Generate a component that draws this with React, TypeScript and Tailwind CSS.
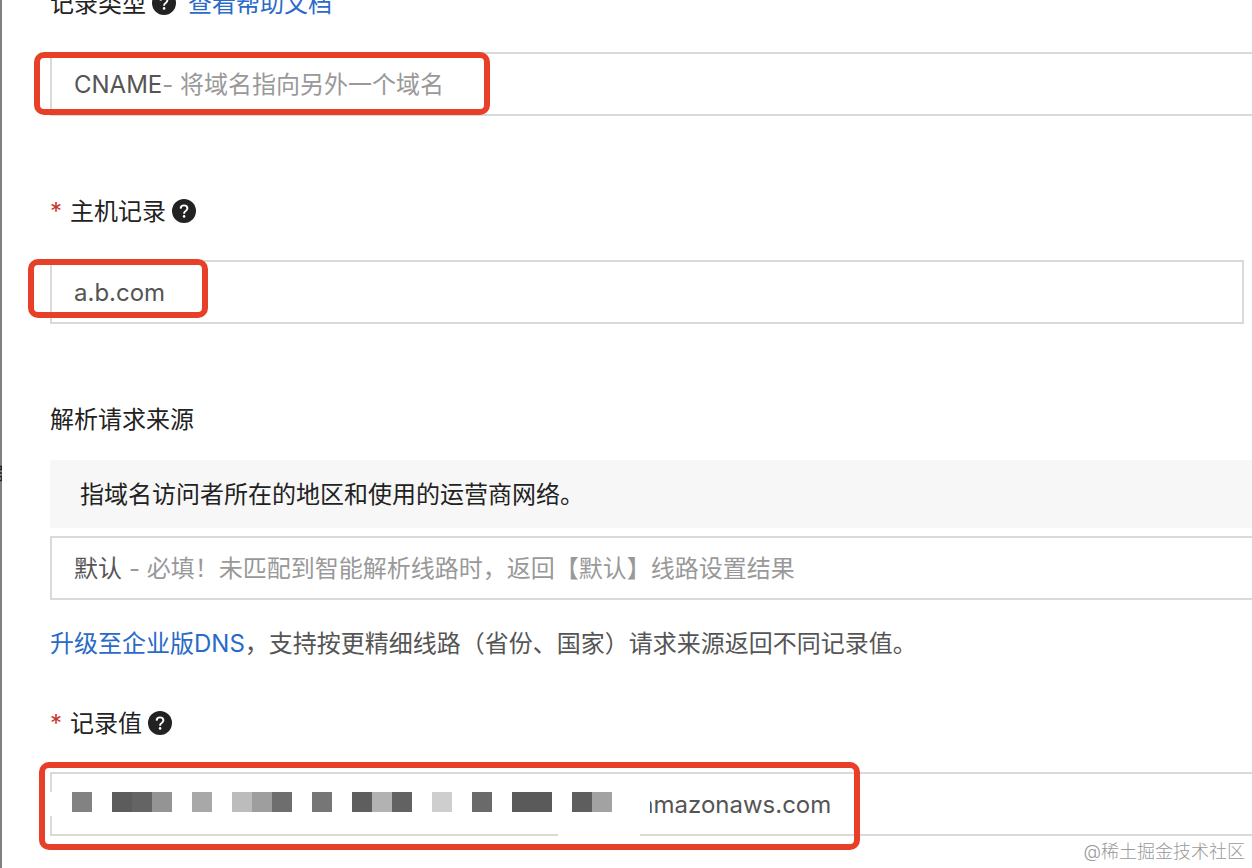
import React, { useState } from "react";

const MOSAIC = [
  "bg-[#828282]", "", "bg-[#5c5c5c]", "bg-[#646464]", "bg-[#949494]", "",
  "bg-[#a8a8a8]", "", "bg-[#bcbcbc]", "bg-[#9e9e9e]", "bg-[#6e6e6e]", "",
  "bg-[#767676]", "", "bg-[#5e5e5e]", "bg-[#b2b2b2]", "bg-[#626262]", "",
  "bg-[#cecece]", "", "bg-[#6a6a6a]", "", "bg-[#5a5a5a]", "bg-[#5a5a5a]", "",
  "bg-[#5e5e5e]", "bg-[#a2a2a2]",
];

const HelpIcon = () => (
  <svg viewBox="0 0 24 24" className="h-6 w-6 shrink-0" aria-hidden="true">
    <circle cx="12" cy="12" r="12" fill="#222" />
    <path
      d="M8.6 9.6C8.7 7.5 10 6.4 12 6.4s3.4 1.1 3.4 2.9c0 1.3-.7 2-1.7 2.7-1.2.8-1.6 1.2-1.6 2.3v.4"
      fill="none"
      stroke="#fff"
      strokeWidth="1.9"
    />
    <circle cx="12.1" cy="17.4" r="1.3" fill="#fff" />
  </svg>
);

const HelpButton = ({ label }: { label: string }) => (
  <button type="button" aria-label={label} className="mb-0.5 ml-1.5 rounded-full">
    <HelpIcon />
  </button>
);

const Required = () => (
  <span className="w-5 text-[#c8362b]" aria-hidden="true">
    *
  </span>
);

// Red frame drawn round the part of a field the reader has to look at
const Highlight = ({ className }: { className: string }) => (
  <div
    className={`pointer-events-none absolute rounded-[10px] border-[6px] border-[#e83f28] ${className}`}
  />
);

type DropdownProps = {
  id: string;
  value: string;
  hint: string;
  spaced?: boolean;
};

const Dropdown = ({ id, value, hint, spaced }: DropdownProps) => (
  <div className="relative flex h-16 items-center border-2 border-r-0 border-[#d9d9d9] px-[22px] pt-0.5">
    <span className="text-[#555]">{value}</span>
    <span className={`text-[#999] ${spaced ? "ml-[7px]" : ""}`}>- {hint}</span>
    <select id={id} className="absolute inset-0 h-full w-full cursor-pointer opacity-0">
      <option>{value}</option>
    </select>
  </div>
);

export default function App() {
  const [host, setHost] = useState("a.b.com");
  const [record, setRecord] = useState("amazonaws.com");

  return (
    <div className="relative flex min-h-screen overflow-hidden bg-white font-['Inter','Noto_Sans_CJK_SC',sans-serif] text-2xl leading-8 text-[#222]">
      {/* Sliver of the page behind the panel */}
      <div className="w-0.5 shrink-0 bg-[#808080] pt-[465px]">
        <svg viewBox="0 0 2 18" className="h-[18px] w-0.5" aria-hidden="true">
          <path d="M0 1.5h1.5v3H0M0 8h2M0 11.5h2v4H0" fill="none" stroke="#222" strokeWidth="1.5" />
        </svg>
      </div>
      <form className="-mt-3 min-w-0 flex-1 pb-8 pl-12">
        <div className="mb-8 flex items-center">
          <label htmlFor="type">记录类型</label>
          <HelpButton label="记录类型" />
          <a href="#help" className="ml-3 text-[#2a6ac8]">
            查看帮助文档
          </a>
        </div>
        <div className="relative mb-20">
          <Dropdown id="type" value="CNAME" hint="将域名指向另外一个域名" />
          <Highlight className="-left-4 top-0 h-[63px] w-[456px]" />
        </div>

        <div className="mb-8 flex items-center">
          <Required />
          <label htmlFor="host">主机记录</label>
          <HelpButton label="主机记录" />
        </div>
        <div className="relative mb-20 pr-2">
          <input
            id="host"
            value={host}
            onChange={(e) => setHost(e.target.value)}
            className="block h-16 w-full border-2 border-[#d9d9d9] px-[22px] text-[#555] outline-none"
          />
          <Highlight className="-left-[22px] -top-px h-[59px] w-[180px]" />
        </div>

        <div className="mb-6">
          <label htmlFor="line">解析请求来源</label>
        </div>
        <p className="mb-2 bg-[#f7f7f7] px-[30px] pb-[17px] pt-[19px]">
          指域名访问者所在的地区和使用的运营商网络。
        </p>
        <Dropdown
          id="line"
          value="默认"
          hint="必填！未匹配到智能解析线路时，返回【默认】线路设置结果"
          spaced
        />
        <p className="mb-12 mt-7 text-[#555]">
          <a href="#upgrade" className="text-[#2a6ac8]">
            升级至企业版DNS
          </a>
          ，支持按更精细线路（省份、国家）请求来源返回不同记录值。
        </p>

        <div className="mb-8 flex items-center">
          <Required />
          <label htmlFor="record">记录值</label>
          <HelpButton label="记录值" />
        </div>
        <div className="relative">
          <input
            id="record"
            value={record}
            onChange={(e) => setRecord(e.target.value)}
            className="block h-16 w-full border-2 border-r-0 border-[#d9d9d9] pl-[588px] text-[#555] outline-none"
          />
          {/* Masked part of the value */}
          <div className="pointer-events-none absolute bottom-0 left-[508px] h-4 w-[82px] bg-white" />
          <div className="pointer-events-none absolute left-0 top-5 flex h-6 w-[600px] bg-white pl-[22px]">
            {MOSAIC.map((shade, i) => (
              <span key={i} className={`h-5 w-5 ${shade}`} />
            ))}
          </div>
          <Highlight className="-left-[11px] -top-[10px] h-[88px] w-[821px]" />
        </div>
      </form>
      <span className="pointer-events-none absolute bottom-1 right-[7px] text-lg leading-6 font-light text-[#999]">
        @稀土掘金技术社区
      </span>
    </div>
  );
}
